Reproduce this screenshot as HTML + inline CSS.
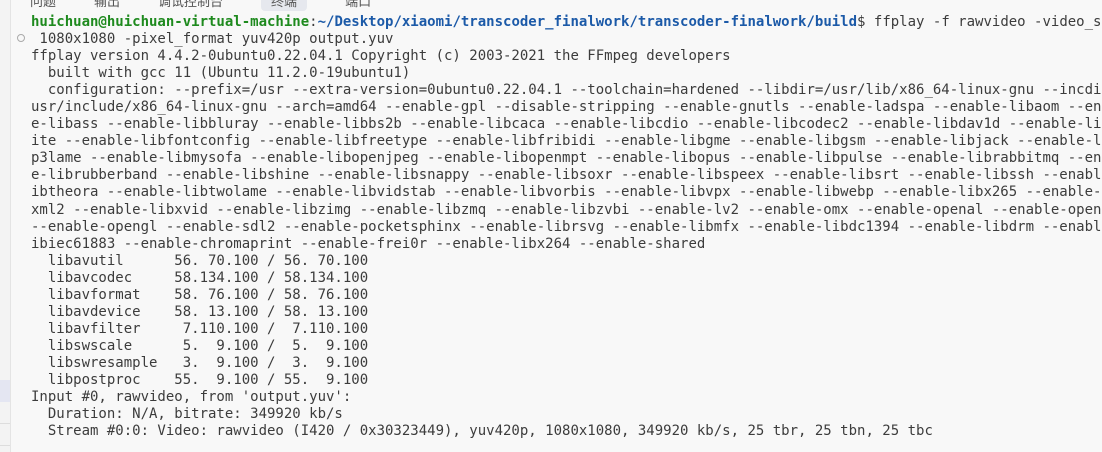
<!DOCTYPE html>
<html><head><meta charset="utf-8"><style>
html,body{margin:0;padding:0;width:1102px;height:452px;overflow:hidden;background:#f8f8f8;}
.side{position:absolute;left:0;top:0;width:10px;height:452px;background:#f3f3f3;border-right:1px solid #e4e4e4;}
.hl{position:absolute;left:0;top:380px;width:10px;height:22px;background:#e4e6f2;}
.sep{position:absolute;left:0;width:10px;height:1px;background:#ddd;}
.tabs{position:absolute;top:-9px;left:30px;font:13px "Liberation Sans","Noto Sans CJK SC",sans-serif;color:#555;white-space:nowrap;}
.tabs span{margin-right:38px}
.tabs .act{background:#e6e8ee;padding:2px 10px;border-radius:4px}
pre{position:absolute;left:31px;top:14px;margin:0;font:14px/17.04px "DejaVu Sans Mono",monospace;color:#3c3c3c;white-space:pre;}
.g{color:#1e8a1e;font-weight:bold}
.b{color:#1c5aa8;font-weight:bold}
.dot{position:absolute;left:17px;top:34px;width:6px;height:6px;border:1.5px solid #aaa;border-radius:50%;}
</style></head><body>
<div class="side"></div><div class="hl"></div>
<div class="sep" style="top:423px"></div><div class="sep" style="top:445px"></div>
<div class="tabs"><span>问题</span><span>输出</span><span>调试控制台</span><span class="act">终端</span><span>端口</span></div>
<div class="dot"></div>
<pre><span class="g">huichuan@huichuan-virtual-machine</span>:<span class="b">~/Desktop/xiaomi/transcoder_finalwork/transcoder-finalwork/build</span>$ ffplay -f rawvideo -video_s
 1080x1080 -pixel_format yuv420p output.yuv
ffplay version 4.4.2-0ubuntu0.22.04.1 Copyright (c) 2003-2021 the FFmpeg developers
  built with gcc 11 (Ubuntu 11.2.0-19ubuntu1)
  configuration: --prefix=/usr --extra-version=0ubuntu0.22.04.1 --toolchain=hardened --libdir=/usr/lib/x86_64-linux-gnu --incdir=/
usr/include/x86_64-linux-gnu --arch=amd64 --enable-gpl --disable-stripping --enable-gnutls --enable-ladspa --enable-libaom --enabl
e-libass --enable-libbluray --enable-libbs2b --enable-libcaca --enable-libcdio --enable-libcodec2 --enable-libdav1d --enable-libfl
ite --enable-libfontconfig --enable-libfreetype --enable-libfribidi --enable-libgme --enable-libgsm --enable-libjack --enable-libm
p3lame --enable-libmysofa --enable-libopenjpeg --enable-libopenmpt --enable-libopus --enable-libpulse --enable-librabbitmq --enabl
e-librubberband --enable-libshine --enable-libsnappy --enable-libsoxr --enable-libspeex --enable-libsrt --enable-libssh --enable-l
ibtheora --enable-libtwolame --enable-libvidstab --enable-libvorbis --enable-libvpx --enable-libwebp --enable-libx265 --enable-lib
xml2 --enable-libxvid --enable-libzimg --enable-libzmq --enable-libzvbi --enable-lv2 --enable-omx --enable-openal --enable-opencl
--enable-opengl --enable-sdl2 --enable-pocketsphinx --enable-librsvg --enable-libmfx --enable-libdc1394 --enable-libdrm --enable-l
ibiec61883 --enable-chromaprint --enable-frei0r --enable-libx264 --enable-shared
  libavutil      56. 70.100 / 56. 70.100
  libavcodec     58.134.100 / 58.134.100
  libavformat    58. 76.100 / 58. 76.100
  libavdevice    58. 13.100 / 58. 13.100
  libavfilter     7.110.100 /  7.110.100
  libswscale      5.  9.100 /  5.  9.100
  libswresample   3.  9.100 /  3.  9.100
  libpostproc    55.  9.100 / 55.  9.100
Input #0, rawvideo, from 'output.yuv':
  Duration: N/A, bitrate: 349920 kb/s
  Stream #0:0: Video: rawvideo (I420 / 0x30323449), yuv420p, 1080x1080, 349920 kb/s, 25 tbr, 25 tbn, 25 tbc</pre>
</body></html>
